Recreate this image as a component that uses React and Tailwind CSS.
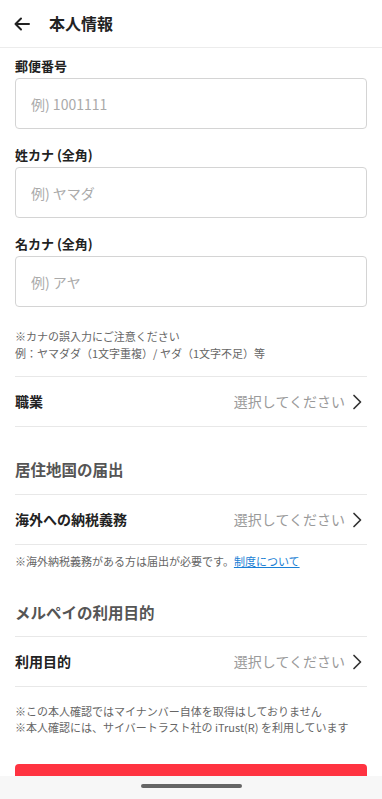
import React from 'react';

const Chevron = () => (
    <svg width="10" height="16" viewBox="0 0 10 16" fill="none" className="ml-[7px]">
        <path d="M2 1.5 L8.5 8 L2 14.5" stroke="#333" strokeWidth="1.7" strokeLinecap="round" strokeLinejoin="round" />
    </svg>
);

function Field({ label, placeholder, first }) {
    return (
        <div className={first ? 'pt-2' : 'pt-[16px]'}>
            <div className="h-5 leading-5 text-[13px] font-bold text-[#222] mb-0.5">{label}</div>
            <input
                className="w-full h-[51px] border border-[#d4d4d4] rounded-[4px] px-[15px] text-[14px] text-[#222] placeholder:text-[#aaa] outline-none"
                placeholder={placeholder}
            />
        </div>
    );
}

function SelectRow({ label }) {
    return (
        <div className="h-[50px] flex items-center justify-between border-b border-[#e8e8e8]">
            <span className="text-[14px] font-bold text-[#222]">{label}</span>
            <span className="flex items-center text-[14px] text-[#9a9a9a] pr-[5px]">
                選択してください
                <Chevron />
            </span>
        </div>
    );
}

export default function App() {
    return (
        <div className="h-[799px] flex flex-col bg-white font-['Noto_Sans_CJK_JP',sans-serif] overflow-hidden">
            {/* Header */}
            <div className="h-[48px] shrink-0 flex items-center border-b border-[#ececec]">
                <svg width="18" height="16" viewBox="0 0 18 16" fill="none" className="ml-[13px]">
                    <path d="M16 8 H2.5 M8 2.5 L2.5 8 L8 13.5" stroke="#222" strokeWidth="2" strokeLinecap="round" strokeLinejoin="round" />
                </svg>
                <span className="ml-[18px] text-[16px] font-bold text-[#222] leading-none -mt-[2px]">本人情報</span>
            </div>

            <main className="flex-1 overflow-hidden px-[15px]">
                <Field first label="郵便番号" placeholder="例) 1001111" />
                <Field label="姓カナ (全角)" placeholder="例) ヤマダ" />
                <Field label="名カナ (全角)" placeholder="例) アヤ" />

                <div className="pt-[21px] pb-[14px] text-[11px] leading-[17px] text-[#666] border-b border-[#e8e8e8]">
                    <p>※カナの誤入力にご注意ください</p>
                    <p>例：ヤマダダ（1文字重複）/ ヤダ（1文字不足）等</p>
                </div>
                <SelectRow label="職業" />

                <div className="pt-[31px] pb-[14px] leading-[22px] text-[15.5px] font-bold text-[#555] border-b border-[#e8e8e8]">居住地国の届出</div>
                <SelectRow label="海外への納税義務" />
                <p className="pt-[8px] text-[11px] leading-[16px] text-[#666]">
                    ※海外納税義務がある方は届出が必要です。<span className="text-[#1a7fd4] underline">制度について</span>
                </p>

                <div className="pt-[32px] pb-[13px] leading-[22px] text-[15.5px] font-bold text-[#555] border-b border-[#e8e8e8]">メルペイの利用目的</div>
                <SelectRow label="利用目的" />

                <div className="pt-[16px] text-[11px] leading-[16px] text-[#666]">
                    <p>※この本人確認ではマイナンバー自体を取得はしておりません</p>
                    <p>※本人確認には、サイバートラスト社の iTrust(R) を利用しています</p>
                </div>

                <div className="mt-[29px] w-full h-[48px] rounded-[4px] bg-[#ff3341]" />
            </main>

            {/* System nav bar */}
            <div className="h-[23px] shrink-0 bg-[#f7f7f7] flex items-center justify-center">
                <div className="w-[101px] h-[4px] rounded-full bg-[#666] -mt-[4px]" />
            </div>
        </div>
    );
}
